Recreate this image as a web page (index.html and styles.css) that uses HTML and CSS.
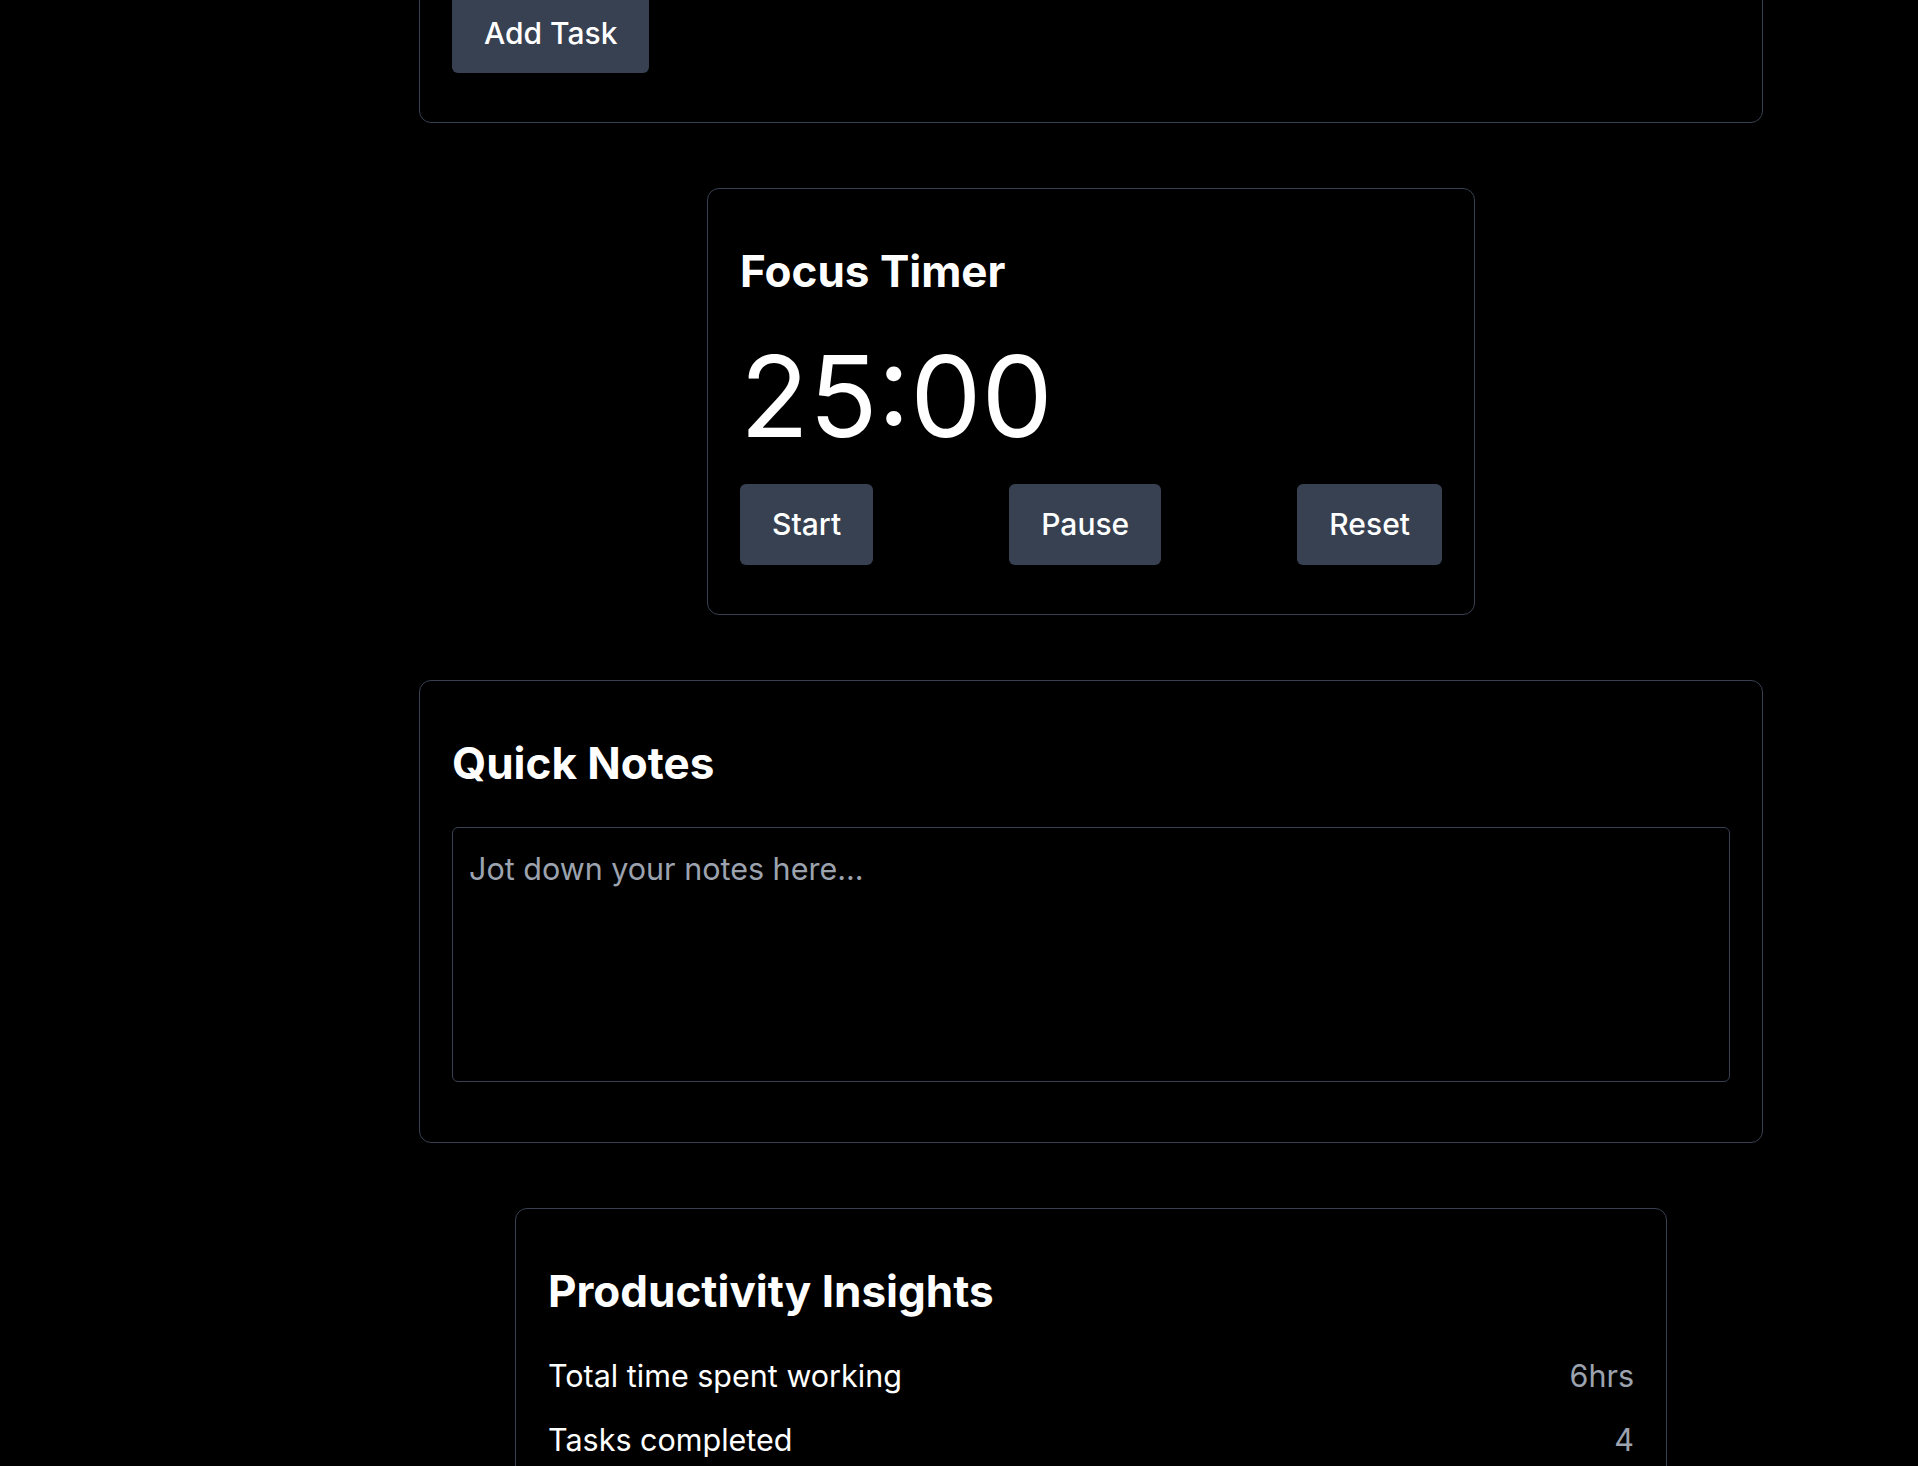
FILE: index.html
```html
<!DOCTYPE html>
<html lang="en">
    <head>
        <meta charset="UTF-8" />
        <meta name="viewport" content="width=device-width, initial-scale=1.0" />
        <title>Dashboard</title>
        <link rel="stylesheet" href="styles.css">
    </head>
    <body>
        <main class="page">
            <!-- Tasks (scrolled past, only the bottom is in view) -->
            <section class="card card-wide card-tasks">
                <button class="btn" id="addTask">Add Task</button>
            </section>

            <!-- Focus timer -->
            <section class="card card-timer">
                <h2>Focus Timer</h2>
                <div class="timer-display" id="timer">25:00</div>
                <div class="timer-controls">
                    <button class="btn" id="start">Start</button>
                    <button class="btn" id="pause">Pause</button>
                    <button class="btn" id="reset">Reset</button>
                </div>
            </section>

            <!-- Notes -->
            <section class="card card-wide">
                <h2>Quick Notes</h2>
                <textarea class="notes" placeholder="Jot down your notes here..."></textarea>
            </section>

            <!-- Insights -->
            <section class="card card-insights">
                <h2>Productivity Insights</h2>
                <ul class="stats">
                    <li><span>Total time spent working</span><span class="stat-value">6hrs</span></li>
                    <li><span>Tasks completed</span><span class="stat-value">4</span></li>
                    <li><span>Focus sessions</span><span class="stat-value">3</span></li>
                </ul>
            </section>
        </main>
    </body>
</html>
```

FILE: styles.css
```css
body {
    margin: 0;
    background-color: #000;
    color: #fff;
    font-family: Inter, "Noto Sans", sans-serif;
}

.page {
    display: flex;
    flex-direction: column;
    align-items: center;
    gap: 65px;
    padding: 0 0 65px 264px;
}

.card {
    box-sizing: border-box;
    border: 1px solid #374151;
    border-radius: 12px;
    padding: 48px 32px;
}

.card h2 {
    margin: 7px 0 37px;
    font-size: 44px;
    line-height: 54px;
    font-weight: 700;
}

.card-wide {
    width: 1344px;
}

.card-timer {
    width: 768px;
    padding-bottom: 49px;
}

.card-timer h2 {
    margin-bottom: 42px;
}

.card-insights {
    width: 1152px;
}

.card-tasks {
    margin-top: -56px;
    padding-bottom: 49px;
}

.btn {
    padding: 19px 32px;
    font-family: inherit;
    font-size: 30px;
    line-height: 42px;
    font-weight: 500;
    color: #fff;
    background-color: #374151;
    border: none;
    border-radius: 6px;
    cursor: pointer;
}

.btn:hover {
    background-color: #4b5563;
}

.timer-display {
    margin-bottom: 31px;
    font-size: 113px;
    line-height: 1;
    font-weight: 400;
}

.timer-controls {
    display: flex;
    justify-content: space-between;
}

.timer-controls .btn {
    padding-bottom: 20px;
}

.notes {
    display: block;
    box-sizing: border-box;
    width: 100%;
    height: 255px;
    margin-bottom: 12px;
    padding: 20px 16px;
    font-family: inherit;
    font-size: 30.5px;
    line-height: 42px;
    color: #fff;
    background-color: #000;
    border: 1px solid #374151;
    border-radius: 6px;
    resize: none;
}

.notes::placeholder {
    color: #9ca3af;
}

.stats {
    list-style: none;
    margin: 0;
    padding: 0;
    display: flex;
    flex-direction: column;
    gap: 22px;
    font-size: 30.5px;
    line-height: 42px;
}

.stats li {
    display: flex;
    justify-content: space-between;
}

.stat-value {
    color: #9ca3af;
}
```
